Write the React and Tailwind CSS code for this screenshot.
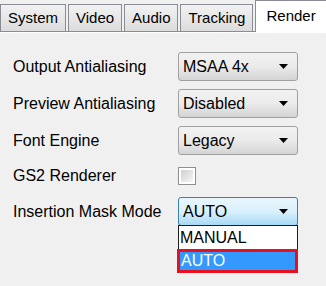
import React from 'react';

const FONT = { fontFamily: '"Liberation Sans", Arial, sans-serif' };

// 小さい下向き三角
const Arrow = () => (
  <svg width="9" height="5" viewBox="0 0 9 5" className="shrink-0">
    <path d="M0 0 H9 L4.5 5 Z" fill="#000" />
  </svg>
);

const Combo = ({ value, active = false }) => (
  <div
    className={`w-[120px] h-[29px] rounded-[3px] border flex items-center pl-[4px] pr-[9px] justify-between ${
      active
        ? 'border-[#3c7fb1] bg-gradient-to-b from-[#eaf6fd] via-[#d9f0fc] to-[#a7d9f5]'
        : 'border-[#a0a0a0] bg-gradient-to-b from-[#f2f2f2] via-[#ebebeb] to-[#d4d4d4]'
    }`}
  >
    <span className="text-[16px] text-black leading-none">{value}</span>
    <Arrow />
  </div>
);

const Tab = ({ label, selected }) =>
  selected ? (
    <div className="h-[32px] w-[72px] bg-white border-l border-t border-[#898c95] flex items-center pl-[10px] text-[15px] text-black -mb-px relative z-10">
      {label}
    </div>
  ) : (
    <div className="h-[27px] border border-[#898c95] border-b-0 bg-gradient-to-b from-[#f2f2f2] to-[#dcdcdc] flex items-center px-[7px] text-[15px] text-black mr-[2px]">
      {label}
    </div>
  );

const Row = ({ label, children, h = 'h-[29px]' }) => (
  <div className={`flex items-center ${h}`}>
    <div className="w-[165px] text-[16px] text-black">{label}</div>
    {children}
  </div>
);

export default function App() {
  return (
    <div className="w-[326px] h-[286px] bg-[#f0f0f0] overflow-hidden relative" style={FONT}>
      <div className="flex items-end h-[32px] border-b border-[#898c95]">
        <Tab label="System" />
        <Tab label="Video" />
        <Tab label="Audio" />
        <Tab label="Tracking" />
        <Tab label="Render" selected />
      </div>
      <div className="pl-[13px] pt-[19px] flex flex-col gap-[8px] border-t border-white">
        <Row label="Output Antialiasing">
          <Combo value="MSAA 4x" />
        </Row>
        <Row label="Preview Antialiasing">
          <Combo value="Disabled" />
        </Row>
        <Row label="Font Engine">
          <Combo value="Legacy" />
        </Row>
        <Row label="GS2 Renderer" h="h-[26px]">
          <div className="w-[18px] h-[18px] border border-[#8f8f8f] bg-white p-[2px]">
            <div className="w-full h-full bg-gradient-to-br from-[#d0d0d0] to-[#f6f6f6]" />
          </div>
        </Row>
        <Row label="Insertion Mask Mode">
          <div className="relative">
            <Combo value="AUTO" active />
            <div className="absolute left-0 top-[28px] w-[120px] bg-white border border-[#1e1e1e] z-20">
              <div className="h-[23px] flex items-center pl-[1px] text-[16px] text-black">MANUAL</div>
            </div>
            <div className="absolute left-[-1px] top-[52px] w-[121px] h-[24px] border-[3px] border-[#e8101e] bg-[#3399ff] z-30 flex items-center pl-[1px] text-[16px] text-white">
              AUTO
            </div>
          </div>
        </Row>
      </div>
    </div>
  );
}
